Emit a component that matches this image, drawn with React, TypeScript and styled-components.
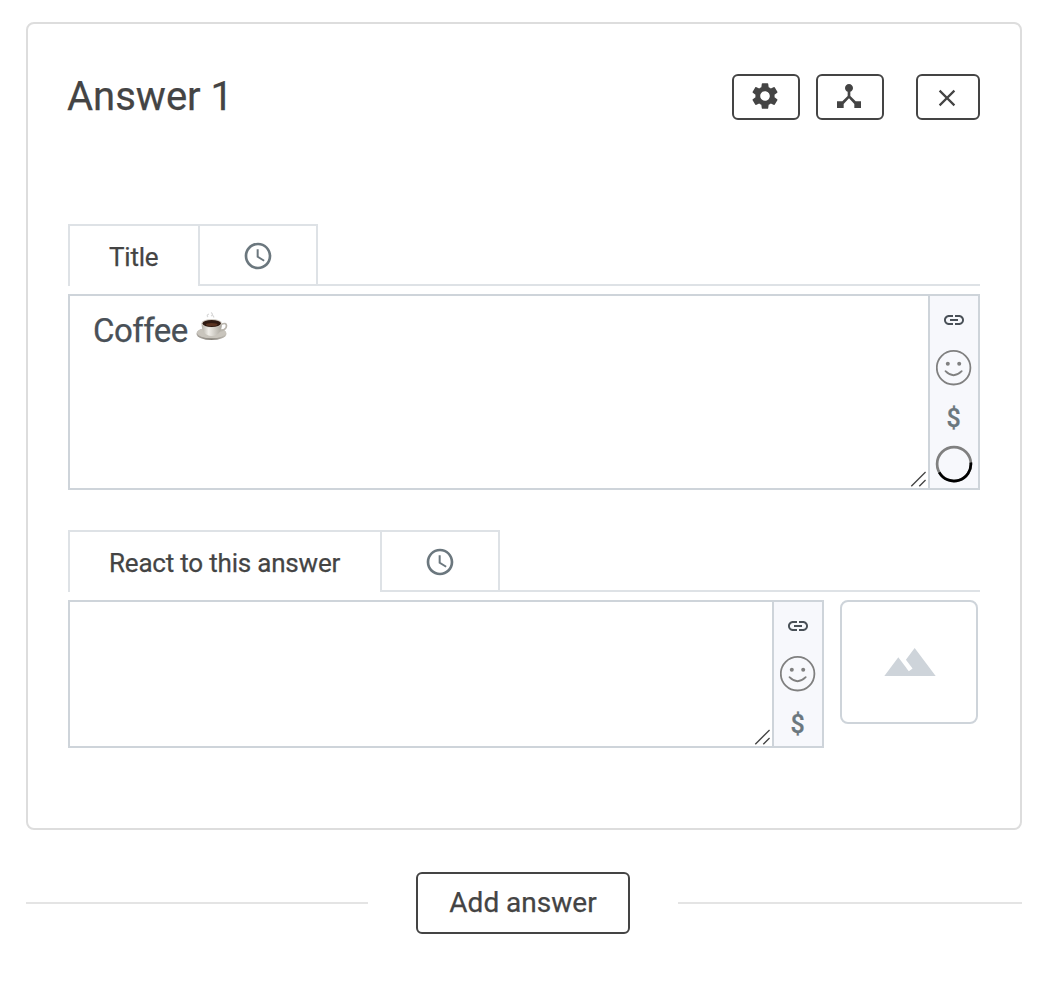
import React from 'react';
import styled, { createGlobalStyle } from 'styled-components';
import { MdAccessTime, MdDeviceHub, MdLandscape, MdLink, MdSettings } from 'react-icons/md';

const GlobalStyle = createGlobalStyle`
  * { box-sizing: border-box; }
  body {
    margin: 0;
    background: #fff;
    font-family: Roboto, sans-serif;
    color: #444;
    -webkit-text-stroke: 0.25px currentColor;
  }
  button { font: inherit; color: inherit; background: #fff; padding: 0; }
  svg { display: block; flex: none; }
`;

const Page = styled.main`
  padding: 22px 34px 0 26px;
`;

const Card = styled.section`
  height: 808px;
  border: 2px solid #ddd;
  border-radius: 8px;
  padding: 50px 40px 0;
`;

const Header = styled.header`
  display: flex;
  align-items: flex-start;
  height: 150px;
`;

const Heading = styled.h2`
  flex: 1;
  margin: 0 0 0 -1px;
  font-size: 40px;
  line-height: 46px;
  font-weight: 400;
`;

const ToolButton = styled.button<{ $width: number; $gap?: number }>`
  display: flex;
  align-items: center;
  justify-content: center;
  width: ${(p) => p.$width}px;
  height: 46px;
  margin-left: ${(p) => p.$gap ?? 0}px;
  padding: 0 2px 2px 0;
  border: 2px solid #444;
  border-radius: 6px;
`;

const Field = styled.section<{ $gapAfter?: number }>`
  margin-bottom: ${(p) => p.$gapAfter ?? 0}px;
`;

const Tabs = styled.div`
  display: flex;
  height: 62px;
  margin-bottom: 8px;
`;

const ActiveTab = styled.div<{ $width: number }>`
  width: ${(p) => p.$width}px;
  padding-left: 39px;
  border: solid #dee2e6;
  border-width: 2px 0 0 2px;
  font-size: 26px;
  line-height: 62px;
  letter-spacing: -0.2px;
  white-space: nowrap;
`;

const ClockTab = styled.div`
  display: flex;
  align-items: center;
  justify-content: center;
  width: 120px;
  padding: 2px 0 0;
  border: 2px solid #dee2e6;
  color: #6b777e;

  svg { margin-left: 0.5px; }
`;

const TabsRule = styled.div`
  flex: 1;
  border-bottom: 2px solid #dee2e6;
`;

const FieldRow = styled.div`
  display: flex;
  align-items: flex-start;
  gap: 16px;
`;

const Editor = styled.div<{ $height: number }>`
  flex: 1;
  display: flex;
  height: ${(p) => p.$height}px;
  border: 2px solid #ced4da;
`;

const TextBox = styled.div`
  position: relative;
  flex: 1;
  display: flex;
  align-items: flex-start;
  padding: 14px 23px;
  color: #495057;
  font-size: 33px;
  line-height: 42px;
  letter-spacing: -0.5px;
`;

const Grip = styled.svg`
  position: absolute;
  right: 2px;
  bottom: 1px;
`;

const SideBar = styled.div`
  display: flex;
  flex-direction: column;
  align-items: center;
  width: 50px;
  padding-top: 12px;
  border-left: 2px solid #ced4da;
  background: #f7f8fc;
`;

const SideItem = styled.div<{ $height: number; $color?: string }>`
  display: flex;
  flex: none;
  align-items: center;
  justify-content: center;
  height: ${(p) => p.$height}px;
  color: ${(p) => p.$color ?? '#808080'};
`;

const Dollar = styled.span`
  padding: 3px 1px 0 0;
  font-size: 25px;
  font-weight: 500;
  line-height: 27px;
`;

const ImagePicker = styled.button`
  display: flex;
  align-items: center;
  justify-content: center;
  width: 138px;
  height: 124px;
  margin-right: 2px;
  padding-left: 2px;
  border: 2px solid #ced4da;
  border-radius: 8px;
  color: #ced4da;
`;

const Footer = styled.footer`
  display: flex;
  align-items: center;
  gap: 48px;
  margin-top: 42px;
`;

const Rule = styled.div<{ $grow: number }>`
  flex: ${(p) => p.$grow} 0 0;
  height: 2px;
  background: #e4e4e4;
`;

const AddButton = styled.button`
  width: 214px;
  height: 62px;
  padding-bottom: 2px;
  border: 2px solid #444;
  border-radius: 6px;
  font-size: 28px;
  white-space: nowrap;
`;

const CloseGlyph = styled.svg`
  margin-top: 3px;
`;

const CupGlyph = styled.svg`
  margin: 2px 0 0 8px;
`;

const CloseIcon = () => (
  <CloseGlyph width="18" height="18" viewBox="0 0 18 18">
    <path d="M1.600 1.600 16.400 16.400M16.400 1.600 1.600 16.400" stroke="#444" strokeWidth="2.200" />
  </CloseGlyph>
);

const SmileIcon = () => (
  <svg width="36" height="36" viewBox="0 0 36 36" fill="none" stroke="currentColor">
    <circle cx="17.600" cy="17.700" r="16.800" strokeWidth="1.800" />
    <circle cx="11.800" cy="13.700" r="2" fill="currentColor" stroke="none" />
    <circle cx="23.200" cy="13.700" r="2" fill="currentColor" stroke="none" />
    <path d="M9.500 21.200q8 8 16.200 0" strokeWidth="1.800" strokeLinecap="round" />
  </svg>
);

const Spinner = () => (
  <svg width="38" height="38" viewBox="0 0 38 38" fill="none" strokeWidth="2.700">
    <circle cx="19" cy="19" r="16.900" stroke="#808080" />
    <path d="M35.800 17.500A16.900 16.900 0 0 1 4.200 27.300" stroke="#000" />
  </svg>
);

const CoffeeCup = () => (
  <CupGlyph width="32" height="30" viewBox="0 0 32 30">
    <defs>
      <linearGradient id="cup" x1="0" x2="1">
        <stop offset="0" stopColor="#b5b1a8" />
        <stop offset=".35" stopColor="#f0eee9" />
        <stop offset="1" stopColor="#aaa69d" />
      </linearGradient>
      <linearGradient id="saucer" x1="0" x2="1">
        <stop offset="0" stopColor="#aaa69f" />
        <stop offset=".5" stopColor="#87837c" />
        <stop offset="1" stopColor="#c5c1b9" />
      </linearGradient>
    </defs>
    <path d="M12 5q-2-2 1-3M15 4q3-1.500 0-3.500M18 5.500l-1-2" fill="none" stroke="#d8d8d8" strokeWidth="1.200" />
    <ellipse cx="15.500" cy="21.800" rx="15" ry="6.300" fill="url(#saucer)" />
    <ellipse cx="15.500" cy="20.800" rx="14.500" ry="5.500" fill="#c9c5bd" />
    <path d="M25 12.500q5.500-2.500 5.500 1.200c0 3-3.500 5-8 5.400" fill="none" stroke="#b9b5ad" strokeWidth="1.700" />
    <path d="M5.500 11.500c0 7 3.500 12.500 10.200 12.500S26 18.500 26 11.500z" fill="url(#cup)" />
    <ellipse cx="15.700" cy="11.300" rx="10.300" ry="4.200" fill="#d2cdc5" />
    <ellipse cx="15.700" cy="11.500" rx="9.200" ry="3.400" fill="#2e1911" />
    <ellipse cx="15.700" cy="12.600" rx="6" ry="1.500" fill="#5a3321" />
  </CupGlyph>
);

const ResizeGrip = () => (
  <Grip width="16" height="16" viewBox="0 0 16 16">
    <path d="M1.300 15.300 15.600 1M9.300 15.300 15.600 9" stroke="#444" strokeWidth="1.400" />
  </Grip>
);

const FieldTabs = ({ label, width }: { label: string; width: number }) => (
  <Tabs>
    <ActiveTab $width={width}>{label}</ActiveTab>
    <ClockTab>
      <MdAccessTime size={32} />
    </ClockTab>
    <TabsRule />
  </Tabs>
);

const InsertBar = ({ busy }: { busy?: boolean }) => (
  <SideBar>
    <SideItem $height={24} $color="#495057">
      <MdLink size={24} />
    </SideItem>
    <SideItem $height={71}>
      <SmileIcon />
    </SideItem>
    <SideItem $height={27} $color="#6b777e">
      <Dollar>$</Dollar>
    </SideItem>
    {busy && (
      <SideItem $height={68}>
        <Spinner />
      </SideItem>
    )}
  </SideBar>
);

export default function App() {
  return (
    <>
      <GlobalStyle />
      <Page>
        <Card>
          <Header>
            <Heading>Answer 1</Heading>
            <ToolButton $width={68} aria-label="Settings">
              <MdSettings size={32} />
            </ToolButton>
            <ToolButton $width={68} $gap={16} aria-label="Branching">
              <MdDeviceHub size={32} />
            </ToolButton>
            <ToolButton $width={64} $gap={32} aria-label="Remove">
              <CloseIcon />
            </ToolButton>
          </Header>
          <Field $gapAfter={40}>
            <FieldTabs label="Title" width={130} />
            <Editor $height={196}>
              <TextBox>
                <span>Coffee</span>
                <CoffeeCup />
                <ResizeGrip />
              </TextBox>
              <InsertBar busy />
            </Editor>
          </Field>
          <Field>
            <FieldTabs label="React to this answer" width={312} />
            <FieldRow>
              <Editor $height={148}>
                <TextBox>
                  <ResizeGrip />
                </TextBox>
                <InsertBar />
              </Editor>
              <ImagePicker aria-label="Choose image">
                <MdLandscape size={56} />
              </ImagePicker>
            </FieldRow>
          </Field>
        </Card>
        <Footer>
          <Rule $grow={342} />
          <AddButton>Add answer</AddButton>
          <Rule $grow={344} />
        </Footer>
      </Page>
    </>
  );
}
